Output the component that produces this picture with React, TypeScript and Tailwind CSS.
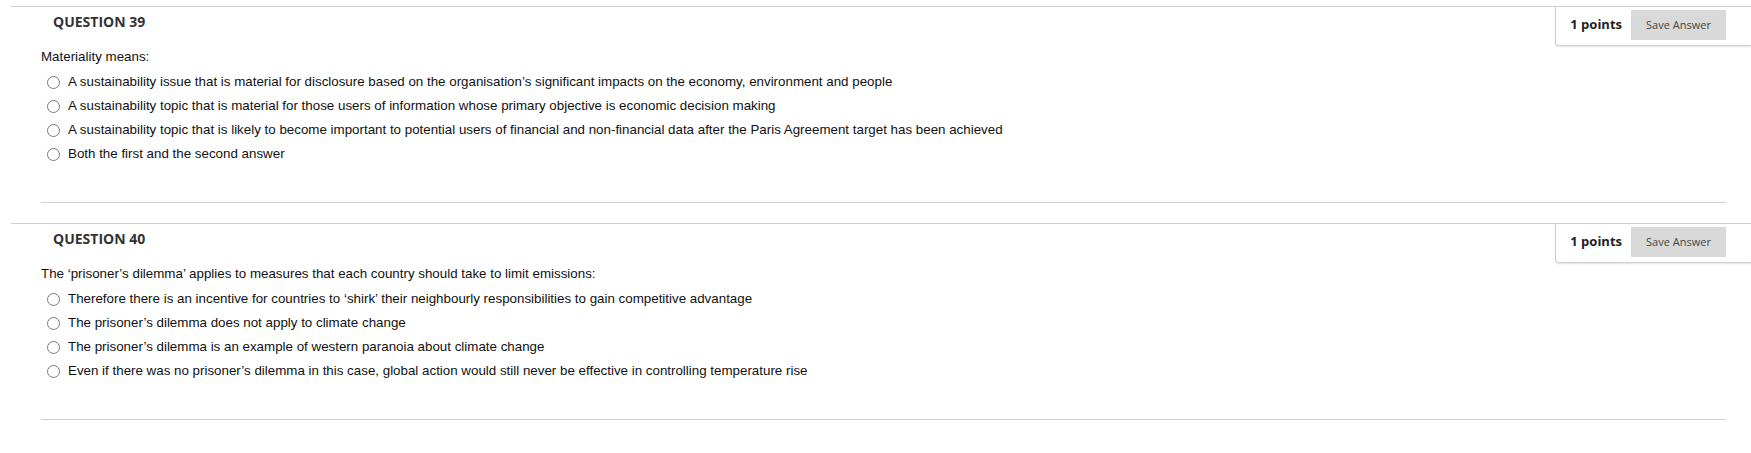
const questions = [
  {
    number: 39,
    prompt: "Materiality means:",
    options: [
      "A sustainability issue that is material for disclosure based on the organisation’s significant impacts on the economy, environment and people",
      "A sustainability topic that is material for those users of information whose primary objective is economic decision making",
      "A sustainability topic that is likely to become important to potential users of financial and non-financial data after the Paris Agreement target has been achieved",
      "Both the first and the second answer",
    ],
  },
  {
    number: 40,
    prompt: "The ‘prisoner’s dilemma’ applies to measures that each country should take to limit emissions:",
    options: [
      "Therefore there is an incentive for countries to ‘shirk’ their neighbourly responsibilities to gain competitive advantage",
      "The prisoner’s dilemma does not apply to climate change",
      "The prisoner’s dilemma is an example of western paranoia about climate change",
      "Even if there was no prisoner’s dilemma in this case, global action would still never be effective in controlling temperature rise",
    ],
  },
];

function PointsBox() {
  return (
    <div className="flex h-[39px] items-start gap-[9px] rounded-bl-[4px] border-b border-l border-[#cfcfcf] pl-[14px] pr-[25px] pt-[3px] shadow-[0_1px_2px_rgba(0,0,0,0.12)] font-['Open_Sans',sans-serif]">
      <span className="flex h-[30px] items-center text-[13px] font-bold text-[#222]">1 points</span>
      <button className="flex h-[30px] w-[95px] items-center justify-center bg-[#d9d9d9] text-[11px] text-[#444]">
        Save Answer
      </button>
    </div>
  );
}

function Question({ number, prompt, options }: { number: number; prompt: string; options: string[] }) {
  return (
    <div className="border-t border-[#d0d0d0] pb-[20px]">
      <div className="flex items-start justify-between">
        <h3 className="pl-[42px] pt-[5px] text-[14px] font-bold leading-[20px] text-[#333] font-['Open_Sans',sans-serif]">
          QUESTION {number}
        </h3>
        <PointsBox />
      </div>
      <div className="font-['Liberation_Sans',Arial,sans-serif] text-[13.35px] text-[#111]">
        <p className="pl-[30px] pt-[1px] leading-[20px]">{prompt}</p>
        <ul className="mt-[3px] pl-[36px]">
          {options.map((o) => (
            <li key={o} className="flex h-[24px] items-center gap-[8px]">
              <span className="block h-[13px] w-[13px] shrink-0 rounded-full border border-[#7a7a7a] bg-white" />
              <span className="leading-[20px]">{o}</span>
            </li>
          ))}
        </ul>
        <div className="ml-[30px] mr-[25px] mt-[36px] border-t border-[#d0d0d0]" />
      </div>
    </div>
  );
}

export default function App() {
  return (
    <div className="h-[453px] w-full bg-white pl-[11px] pt-[6px]">
      {questions.map((q) => (
        <Question key={q.number} {...q} />
      ))}
    </div>
  );
}
